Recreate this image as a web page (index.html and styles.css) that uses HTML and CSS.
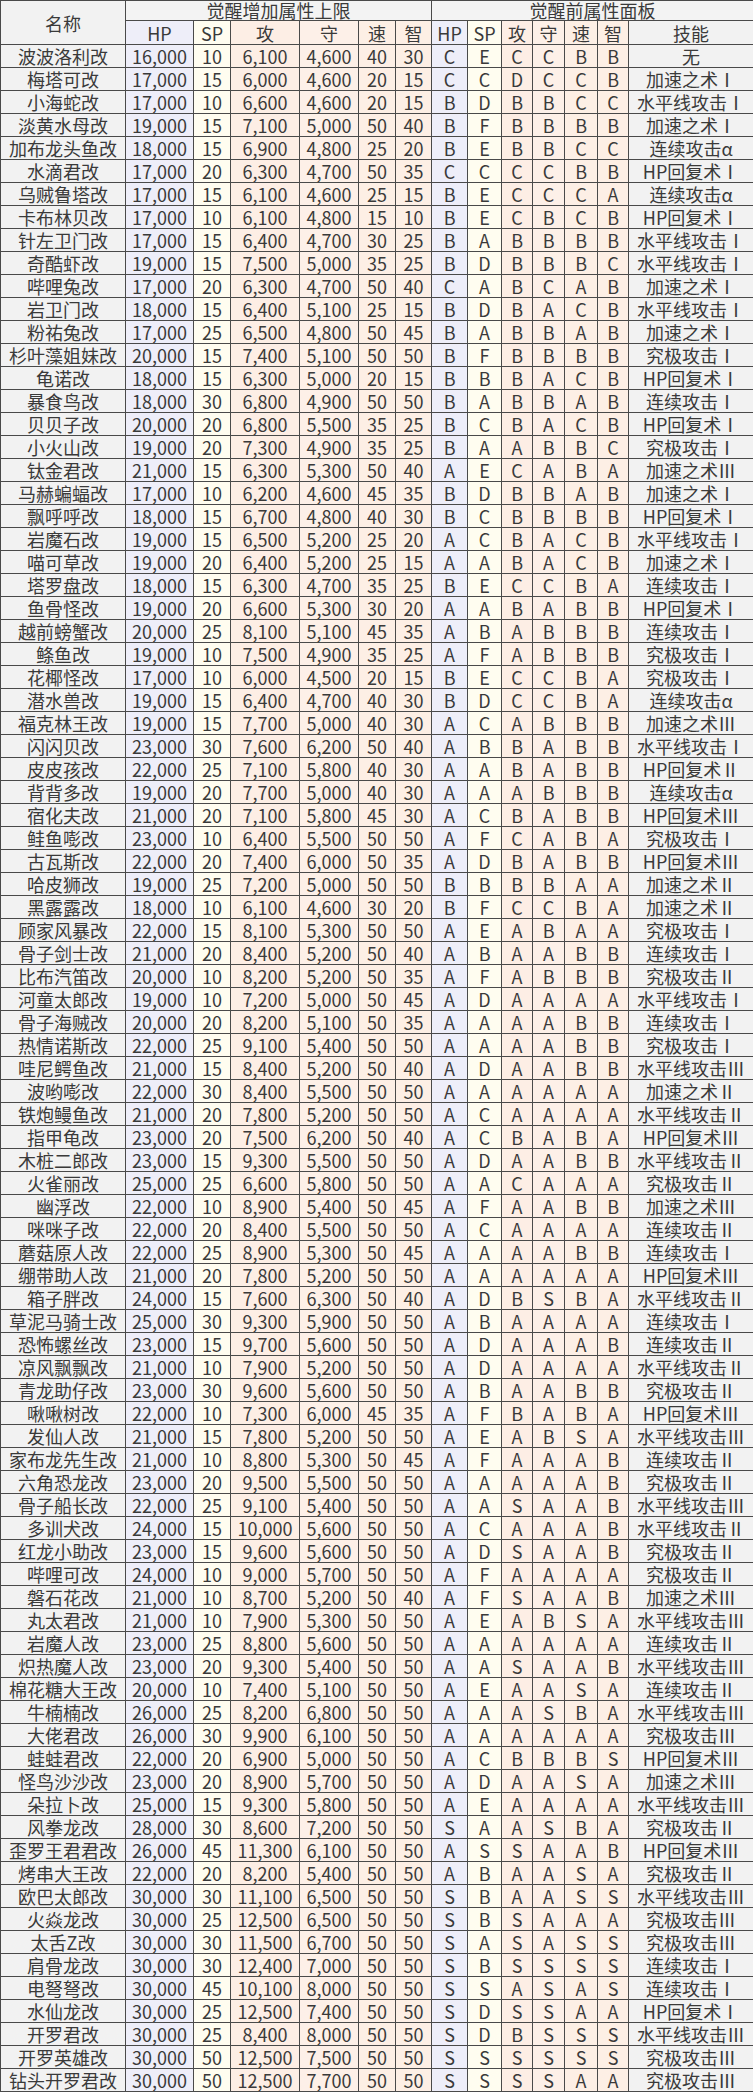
FILE: index.html
```html
<!DOCTYPE html>
<html lang="zh-CN">
<head>
<meta charset="utf-8">
<title>觉醒属性表</title>
<link rel="stylesheet" href="styles.css">
</head>
<body>
<table class="sheet">
<colgroup>
<col class="c-name"><col class="c-hp w-hp"><col class="c-sp w-sp"><col class="c-atk w-atk"><col class="c-def w-def"><col class="c-spd w-spd"><col class="c-int w-int">
<col class="c-hp w-hp2"><col class="c-sp w-sp2"><col class="c-atk w-atk2"><col class="c-def w-def2"><col class="c-spd w-spd2"><col class="c-int w-int2"><col class="c-skill">
</colgroup>
<thead>
<tr class="h1"><th rowspan="2" class="name-h">名称</th><th colspan="6" class="group">觉醒增加属性上限</th><th colspan="7" class="group">觉醒前属性面板</th></tr>
<tr class="h2"><th>HP</th><th>SP</th><th>攻</th><th>守</th><th>速</th><th>智</th><th>HP</th><th>SP</th><th>攻</th><th>守</th><th>速</th><th>智</th><th>技能</th></tr>
</thead>
<tbody>
<tr><td>波波洛利改</td><td>16,000</td><td>10</td><td>6,100</td><td>4,600</td><td>40</td><td>30</td><td>C</td><td>E</td><td>C</td><td>C</td><td>B</td><td>B</td><td>无</td></tr>
<tr><td>梅塔可改</td><td>17,000</td><td>15</td><td>6,000</td><td>4,600</td><td>20</td><td>15</td><td>C</td><td>C</td><td>D</td><td>C</td><td>C</td><td>B</td><td>加速之术Ⅰ</td></tr>
<tr><td>小海蛇改</td><td>17,000</td><td>10</td><td>6,600</td><td>4,600</td><td>20</td><td>15</td><td>B</td><td>D</td><td>B</td><td>B</td><td>C</td><td>C</td><td>水平线攻击Ⅰ</td></tr>
<tr><td>淡黄水母改</td><td>19,000</td><td>15</td><td>7,100</td><td>5,000</td><td>50</td><td>40</td><td>B</td><td>F</td><td>B</td><td>B</td><td>B</td><td>B</td><td>加速之术Ⅰ</td></tr>
<tr><td>加布龙头鱼改</td><td>18,000</td><td>15</td><td>6,900</td><td>4,800</td><td>25</td><td>20</td><td>B</td><td>E</td><td>B</td><td>B</td><td>C</td><td>C</td><td>连续攻击α</td></tr>
<tr><td>水滴君改</td><td>17,000</td><td>20</td><td>6,300</td><td>4,700</td><td>50</td><td>35</td><td>C</td><td>C</td><td>C</td><td>C</td><td>B</td><td>B</td><td>HP回复术Ⅰ</td></tr>
<tr><td>乌贼鲁塔改</td><td>17,000</td><td>15</td><td>6,100</td><td>4,600</td><td>25</td><td>15</td><td>B</td><td>E</td><td>C</td><td>C</td><td>C</td><td>A</td><td>连续攻击α</td></tr>
<tr><td>卡布林贝改</td><td>17,000</td><td>10</td><td>6,100</td><td>4,800</td><td>15</td><td>10</td><td>B</td><td>E</td><td>C</td><td>B</td><td>C</td><td>B</td><td>HP回复术Ⅰ</td></tr>
<tr><td>针左卫门改</td><td>17,000</td><td>15</td><td>6,400</td><td>4,700</td><td>30</td><td>25</td><td>B</td><td>A</td><td>B</td><td>B</td><td>B</td><td>B</td><td>水平线攻击Ⅰ</td></tr>
<tr><td>奇酷虾改</td><td>19,000</td><td>15</td><td>7,500</td><td>5,000</td><td>35</td><td>25</td><td>B</td><td>D</td><td>B</td><td>B</td><td>B</td><td>C</td><td>水平线攻击Ⅰ</td></tr>
<tr><td>哔哩兔改</td><td>17,000</td><td>20</td><td>6,300</td><td>4,700</td><td>50</td><td>40</td><td>C</td><td>A</td><td>B</td><td>C</td><td>A</td><td>B</td><td>加速之术Ⅰ</td></tr>
<tr><td>岩卫门改</td><td>18,000</td><td>15</td><td>6,400</td><td>5,100</td><td>25</td><td>15</td><td>B</td><td>D</td><td>B</td><td>A</td><td>C</td><td>B</td><td>水平线攻击Ⅰ</td></tr>
<tr><td>粉祐兔改</td><td>17,000</td><td>25</td><td>6,500</td><td>4,800</td><td>50</td><td>45</td><td>B</td><td>A</td><td>B</td><td>B</td><td>A</td><td>B</td><td>加速之术Ⅰ</td></tr>
<tr><td>杉叶藻姐妹改</td><td>20,000</td><td>15</td><td>7,400</td><td>5,100</td><td>50</td><td>50</td><td>B</td><td>F</td><td>B</td><td>B</td><td>B</td><td>B</td><td>究极攻击Ⅰ</td></tr>
<tr><td>龟诺改</td><td>18,000</td><td>15</td><td>6,300</td><td>5,000</td><td>20</td><td>15</td><td>B</td><td>B</td><td>B</td><td>A</td><td>C</td><td>B</td><td>HP回复术Ⅰ</td></tr>
<tr><td>暴食鸟改</td><td>18,000</td><td>30</td><td>6,800</td><td>4,900</td><td>50</td><td>50</td><td>B</td><td>A</td><td>B</td><td>B</td><td>A</td><td>B</td><td>连续攻击Ⅰ</td></tr>
<tr><td>贝贝子改</td><td>20,000</td><td>20</td><td>6,800</td><td>5,500</td><td>35</td><td>25</td><td>B</td><td>C</td><td>B</td><td>A</td><td>C</td><td>B</td><td>HP回复术Ⅰ</td></tr>
<tr><td>小火山改</td><td>19,000</td><td>20</td><td>7,300</td><td>4,900</td><td>35</td><td>25</td><td>B</td><td>A</td><td>A</td><td>B</td><td>B</td><td>C</td><td>究极攻击Ⅰ</td></tr>
<tr><td>钛金君改</td><td>21,000</td><td>15</td><td>6,300</td><td>5,300</td><td>50</td><td>40</td><td>A</td><td>E</td><td>C</td><td>A</td><td>B</td><td>A</td><td>加速之术Ⅲ</td></tr>
<tr><td>马赫蝙蝠改</td><td>17,000</td><td>10</td><td>6,200</td><td>4,600</td><td>45</td><td>35</td><td>B</td><td>D</td><td>B</td><td>B</td><td>A</td><td>B</td><td>加速之术Ⅰ</td></tr>
<tr><td>飘呼呼改</td><td>18,000</td><td>15</td><td>6,700</td><td>4,800</td><td>40</td><td>30</td><td>B</td><td>C</td><td>B</td><td>B</td><td>B</td><td>B</td><td>HP回复术Ⅰ</td></tr>
<tr><td>岩魔石改</td><td>19,000</td><td>15</td><td>6,500</td><td>5,200</td><td>25</td><td>20</td><td>A</td><td>C</td><td>B</td><td>A</td><td>C</td><td>B</td><td>水平线攻击Ⅰ</td></tr>
<tr><td>喵可草改</td><td>19,000</td><td>20</td><td>6,400</td><td>5,200</td><td>25</td><td>15</td><td>A</td><td>A</td><td>B</td><td>A</td><td>C</td><td>B</td><td>加速之术Ⅰ</td></tr>
<tr><td>塔罗盘改</td><td>18,000</td><td>15</td><td>6,300</td><td>4,700</td><td>35</td><td>25</td><td>B</td><td>E</td><td>C</td><td>C</td><td>B</td><td>A</td><td>连续攻击Ⅰ</td></tr>
<tr><td>鱼骨怪改</td><td>19,000</td><td>20</td><td>6,600</td><td>5,300</td><td>30</td><td>20</td><td>A</td><td>A</td><td>B</td><td>A</td><td>B</td><td>B</td><td>HP回复术Ⅰ</td></tr>
<tr><td>越前螃蟹改</td><td>20,000</td><td>25</td><td>8,100</td><td>5,100</td><td>45</td><td>35</td><td>A</td><td>B</td><td>A</td><td>B</td><td>B</td><td>B</td><td>连续攻击Ⅰ</td></tr>
<tr><td>鲦鱼改</td><td>19,000</td><td>10</td><td>7,500</td><td>4,900</td><td>35</td><td>25</td><td>A</td><td>F</td><td>A</td><td>B</td><td>B</td><td>B</td><td>究极攻击Ⅰ</td></tr>
<tr><td>花椰怪改</td><td>17,000</td><td>10</td><td>6,000</td><td>4,500</td><td>20</td><td>15</td><td>B</td><td>E</td><td>C</td><td>C</td><td>B</td><td>A</td><td>究极攻击Ⅰ</td></tr>
<tr><td>潜水兽改</td><td>19,000</td><td>15</td><td>6,400</td><td>4,700</td><td>40</td><td>30</td><td>B</td><td>D</td><td>C</td><td>C</td><td>B</td><td>A</td><td>连续攻击α</td></tr>
<tr><td>福克林王改</td><td>19,000</td><td>15</td><td>7,700</td><td>5,000</td><td>40</td><td>30</td><td>A</td><td>C</td><td>A</td><td>B</td><td>B</td><td>B</td><td>加速之术Ⅲ</td></tr>
<tr><td>闪闪贝改</td><td>23,000</td><td>30</td><td>7,600</td><td>6,200</td><td>50</td><td>40</td><td>A</td><td>B</td><td>B</td><td>A</td><td>B</td><td>B</td><td>水平线攻击Ⅰ</td></tr>
<tr><td>皮皮孩改</td><td>22,000</td><td>25</td><td>7,100</td><td>5,800</td><td>40</td><td>30</td><td>A</td><td>A</td><td>B</td><td>A</td><td>B</td><td>B</td><td>HP回复术Ⅱ</td></tr>
<tr><td>背背多改</td><td>19,000</td><td>20</td><td>7,700</td><td>5,000</td><td>40</td><td>30</td><td>A</td><td>A</td><td>A</td><td>B</td><td>B</td><td>B</td><td>连续攻击α</td></tr>
<tr><td>宿化夫改</td><td>21,000</td><td>20</td><td>7,100</td><td>5,800</td><td>45</td><td>30</td><td>A</td><td>C</td><td>B</td><td>A</td><td>B</td><td>B</td><td>HP回复术Ⅲ</td></tr>
<tr><td>鲑鱼嘭改</td><td>23,000</td><td>10</td><td>6,400</td><td>5,500</td><td>50</td><td>50</td><td>A</td><td>F</td><td>C</td><td>A</td><td>B</td><td>A</td><td>究极攻击Ⅰ</td></tr>
<tr><td>古瓦斯改</td><td>22,000</td><td>20</td><td>7,400</td><td>6,000</td><td>50</td><td>35</td><td>A</td><td>D</td><td>B</td><td>A</td><td>B</td><td>B</td><td>HP回复术Ⅲ</td></tr>
<tr><td>哈皮狮改</td><td>19,000</td><td>25</td><td>7,200</td><td>5,000</td><td>50</td><td>50</td><td>B</td><td>B</td><td>B</td><td>B</td><td>A</td><td>A</td><td>加速之术Ⅱ</td></tr>
<tr><td>黑露露改</td><td>18,000</td><td>10</td><td>6,100</td><td>4,600</td><td>30</td><td>20</td><td>B</td><td>F</td><td>C</td><td>C</td><td>B</td><td>A</td><td>加速之术Ⅱ</td></tr>
<tr><td>顾家风暴改</td><td>22,000</td><td>15</td><td>8,100</td><td>5,300</td><td>50</td><td>50</td><td>A</td><td>E</td><td>A</td><td>B</td><td>A</td><td>A</td><td>究极攻击Ⅰ</td></tr>
<tr><td>骨子剑士改</td><td>21,000</td><td>20</td><td>8,400</td><td>5,200</td><td>50</td><td>40</td><td>A</td><td>B</td><td>A</td><td>A</td><td>B</td><td>B</td><td>连续攻击Ⅰ</td></tr>
<tr><td>比布汽笛改</td><td>20,000</td><td>10</td><td>8,200</td><td>5,200</td><td>50</td><td>35</td><td>A</td><td>F</td><td>A</td><td>B</td><td>B</td><td>B</td><td>究极攻击Ⅱ</td></tr>
<tr><td>河童太郎改</td><td>19,000</td><td>10</td><td>7,200</td><td>5,000</td><td>50</td><td>45</td><td>A</td><td>D</td><td>A</td><td>A</td><td>A</td><td>A</td><td>水平线攻击Ⅰ</td></tr>
<tr><td>骨子海贼改</td><td>20,000</td><td>20</td><td>8,200</td><td>5,100</td><td>50</td><td>35</td><td>A</td><td>A</td><td>A</td><td>A</td><td>B</td><td>B</td><td>连续攻击Ⅰ</td></tr>
<tr><td>热情诺斯改</td><td>22,000</td><td>25</td><td>9,100</td><td>5,400</td><td>50</td><td>50</td><td>A</td><td>A</td><td>A</td><td>A</td><td>B</td><td>B</td><td>究极攻击Ⅰ</td></tr>
<tr><td>哇尼鳄鱼改</td><td>21,000</td><td>15</td><td>8,400</td><td>5,200</td><td>50</td><td>40</td><td>A</td><td>D</td><td>A</td><td>A</td><td>B</td><td>B</td><td>水平线攻击Ⅲ</td></tr>
<tr><td>波哟嘭改</td><td>22,000</td><td>30</td><td>8,400</td><td>5,500</td><td>50</td><td>50</td><td>A</td><td>A</td><td>A</td><td>A</td><td>A</td><td>A</td><td>加速之术Ⅱ</td></tr>
<tr><td>铁炮鳗鱼改</td><td>21,000</td><td>20</td><td>7,800</td><td>5,200</td><td>50</td><td>50</td><td>A</td><td>C</td><td>A</td><td>A</td><td>A</td><td>A</td><td>水平线攻击Ⅱ</td></tr>
<tr><td>指甲龟改</td><td>23,000</td><td>20</td><td>7,500</td><td>6,200</td><td>50</td><td>40</td><td>A</td><td>C</td><td>B</td><td>A</td><td>B</td><td>A</td><td>HP回复术Ⅲ</td></tr>
<tr><td>木桩二郎改</td><td>23,000</td><td>15</td><td>9,300</td><td>5,500</td><td>50</td><td>50</td><td>A</td><td>D</td><td>A</td><td>A</td><td>B</td><td>B</td><td>水平线攻击Ⅱ</td></tr>
<tr><td>火雀丽改</td><td>25,000</td><td>25</td><td>6,600</td><td>5,800</td><td>50</td><td>50</td><td>A</td><td>A</td><td>C</td><td>A</td><td>A</td><td>A</td><td>究极攻击Ⅱ</td></tr>
<tr><td>幽浮改</td><td>22,000</td><td>10</td><td>8,900</td><td>5,400</td><td>50</td><td>45</td><td>A</td><td>F</td><td>A</td><td>A</td><td>B</td><td>B</td><td>加速之术Ⅲ</td></tr>
<tr><td>咪咪子改</td><td>22,000</td><td>20</td><td>8,400</td><td>5,500</td><td>50</td><td>50</td><td>A</td><td>C</td><td>A</td><td>A</td><td>A</td><td>A</td><td>连续攻击Ⅱ</td></tr>
<tr><td>蘑菇原人改</td><td>22,000</td><td>25</td><td>8,900</td><td>5,300</td><td>50</td><td>45</td><td>A</td><td>A</td><td>A</td><td>A</td><td>B</td><td>B</td><td>连续攻击Ⅰ</td></tr>
<tr><td>绷带助人改</td><td>21,000</td><td>20</td><td>7,800</td><td>5,200</td><td>50</td><td>50</td><td>A</td><td>A</td><td>A</td><td>A</td><td>A</td><td>A</td><td>HP回复术Ⅲ</td></tr>
<tr><td>箱子胖改</td><td>24,000</td><td>15</td><td>7,600</td><td>6,300</td><td>50</td><td>40</td><td>A</td><td>D</td><td>B</td><td>S</td><td>B</td><td>A</td><td>水平线攻击Ⅱ</td></tr>
<tr><td>草泥马骑士改</td><td>25,000</td><td>30</td><td>9,300</td><td>5,900</td><td>50</td><td>50</td><td>A</td><td>B</td><td>A</td><td>A</td><td>A</td><td>A</td><td>连续攻击Ⅰ</td></tr>
<tr><td>恐怖螺丝改</td><td>23,000</td><td>15</td><td>9,700</td><td>5,600</td><td>50</td><td>50</td><td>A</td><td>D</td><td>A</td><td>A</td><td>A</td><td>B</td><td>连续攻击Ⅱ</td></tr>
<tr><td>凉风飘飘改</td><td>21,000</td><td>10</td><td>7,900</td><td>5,200</td><td>50</td><td>50</td><td>A</td><td>D</td><td>A</td><td>A</td><td>A</td><td>A</td><td>水平线攻击Ⅱ</td></tr>
<tr><td>青龙助仔改</td><td>23,000</td><td>30</td><td>9,600</td><td>5,600</td><td>50</td><td>50</td><td>A</td><td>B</td><td>A</td><td>A</td><td>B</td><td>B</td><td>究极攻击Ⅱ</td></tr>
<tr><td>啾啾树改</td><td>22,000</td><td>10</td><td>7,300</td><td>6,000</td><td>45</td><td>35</td><td>A</td><td>F</td><td>B</td><td>A</td><td>B</td><td>A</td><td>HP回复术Ⅲ</td></tr>
<tr><td>发仙人改</td><td>21,000</td><td>15</td><td>7,800</td><td>5,200</td><td>50</td><td>50</td><td>A</td><td>E</td><td>A</td><td>B</td><td>S</td><td>A</td><td>水平线攻击Ⅲ</td></tr>
<tr><td>家布龙先生改</td><td>21,000</td><td>10</td><td>8,800</td><td>5,300</td><td>50</td><td>45</td><td>A</td><td>F</td><td>A</td><td>A</td><td>A</td><td>B</td><td>连续攻击Ⅱ</td></tr>
<tr><td>六角恐龙改</td><td>23,000</td><td>20</td><td>9,500</td><td>5,500</td><td>50</td><td>50</td><td>A</td><td>A</td><td>A</td><td>A</td><td>A</td><td>B</td><td>究极攻击Ⅱ</td></tr>
<tr><td>骨子船长改</td><td>22,000</td><td>25</td><td>9,100</td><td>5,400</td><td>50</td><td>50</td><td>A</td><td>A</td><td>S</td><td>A</td><td>A</td><td>B</td><td>水平线攻击Ⅲ</td></tr>
<tr><td>多训犬改</td><td>24,000</td><td>15</td><td>10,000</td><td>5,600</td><td>50</td><td>50</td><td>A</td><td>C</td><td>A</td><td>A</td><td>A</td><td>B</td><td>水平线攻击Ⅱ</td></tr>
<tr><td>红龙小助改</td><td>23,000</td><td>15</td><td>9,600</td><td>5,600</td><td>50</td><td>50</td><td>A</td><td>D</td><td>S</td><td>A</td><td>A</td><td>B</td><td>究极攻击Ⅱ</td></tr>
<tr><td>哔哩可改</td><td>24,000</td><td>10</td><td>9,000</td><td>5,700</td><td>50</td><td>50</td><td>A</td><td>F</td><td>A</td><td>A</td><td>A</td><td>A</td><td>究极攻击Ⅱ</td></tr>
<tr><td>磐石花改</td><td>21,000</td><td>10</td><td>8,700</td><td>5,200</td><td>50</td><td>40</td><td>A</td><td>F</td><td>S</td><td>A</td><td>A</td><td>B</td><td>加速之术Ⅲ</td></tr>
<tr><td>丸太君改</td><td>21,000</td><td>10</td><td>7,900</td><td>5,300</td><td>50</td><td>50</td><td>A</td><td>E</td><td>A</td><td>B</td><td>S</td><td>A</td><td>水平线攻击Ⅲ</td></tr>
<tr><td>岩魔人改</td><td>23,000</td><td>25</td><td>8,800</td><td>5,600</td><td>50</td><td>50</td><td>A</td><td>A</td><td>A</td><td>A</td><td>A</td><td>A</td><td>连续攻击Ⅱ</td></tr>
<tr><td>炽热魔人改</td><td>23,000</td><td>20</td><td>9,300</td><td>5,400</td><td>50</td><td>50</td><td>A</td><td>A</td><td>S</td><td>A</td><td>A</td><td>B</td><td>水平线攻击Ⅲ</td></tr>
<tr><td>棉花糖大王改</td><td>20,000</td><td>10</td><td>7,400</td><td>5,100</td><td>50</td><td>50</td><td>A</td><td>E</td><td>A</td><td>A</td><td>S</td><td>A</td><td>连续攻击Ⅱ</td></tr>
<tr><td>牛楠楠改</td><td>26,000</td><td>25</td><td>8,200</td><td>6,800</td><td>50</td><td>50</td><td>A</td><td>A</td><td>A</td><td>S</td><td>B</td><td>A</td><td>水平线攻击Ⅲ</td></tr>
<tr><td>大佬君改</td><td>26,000</td><td>30</td><td>9,900</td><td>6,100</td><td>50</td><td>50</td><td>A</td><td>A</td><td>A</td><td>A</td><td>A</td><td>A</td><td>究极攻击Ⅲ</td></tr>
<tr><td>蛙蛙君改</td><td>22,000</td><td>20</td><td>6,900</td><td>5,000</td><td>50</td><td>50</td><td>A</td><td>C</td><td>B</td><td>B</td><td>B</td><td>S</td><td>HP回复术Ⅲ</td></tr>
<tr><td>怪鸟沙沙改</td><td>23,000</td><td>20</td><td>8,900</td><td>5,700</td><td>50</td><td>50</td><td>A</td><td>D</td><td>A</td><td>A</td><td>S</td><td>A</td><td>加速之术Ⅲ</td></tr>
<tr><td>朵拉卜改</td><td>25,000</td><td>15</td><td>9,300</td><td>5,800</td><td>50</td><td>50</td><td>A</td><td>E</td><td>A</td><td>A</td><td>A</td><td>A</td><td>水平线攻击Ⅲ</td></tr>
<tr><td>风拳龙改</td><td>28,000</td><td>30</td><td>8,600</td><td>7,200</td><td>50</td><td>50</td><td>S</td><td>A</td><td>A</td><td>S</td><td>B</td><td>A</td><td>究极攻击Ⅱ</td></tr>
<tr><td>歪罗王君君改</td><td>26,000</td><td>45</td><td>11,300</td><td>6,100</td><td>50</td><td>50</td><td>A</td><td>S</td><td>S</td><td>A</td><td>A</td><td>B</td><td>HP回复术Ⅲ</td></tr>
<tr><td>烤串大王改</td><td>22,000</td><td>20</td><td>8,200</td><td>5,400</td><td>50</td><td>50</td><td>A</td><td>B</td><td>A</td><td>A</td><td>S</td><td>A</td><td>究极攻击Ⅱ</td></tr>
<tr><td>欧巴太郎改</td><td>30,000</td><td>30</td><td>11,100</td><td>6,500</td><td>50</td><td>50</td><td>S</td><td>B</td><td>A</td><td>A</td><td>S</td><td>S</td><td>水平线攻击Ⅲ</td></tr>
<tr><td>火焱龙改</td><td>30,000</td><td>25</td><td>12,500</td><td>6,500</td><td>50</td><td>50</td><td>S</td><td>B</td><td>S</td><td>A</td><td>A</td><td>A</td><td>究极攻击Ⅲ</td></tr>
<tr><td>太舌Z改</td><td>30,000</td><td>30</td><td>11,500</td><td>6,700</td><td>50</td><td>50</td><td>S</td><td>A</td><td>S</td><td>A</td><td>S</td><td>S</td><td>究极攻击Ⅲ</td></tr>
<tr><td>肩骨龙改</td><td>30,000</td><td>30</td><td>12,400</td><td>7,000</td><td>50</td><td>50</td><td>S</td><td>B</td><td>S</td><td>S</td><td>S</td><td>S</td><td>连续攻击Ⅰ</td></tr>
<tr><td>电弩弩改</td><td>30,000</td><td>45</td><td>10,100</td><td>8,000</td><td>50</td><td>50</td><td>S</td><td>S</td><td>A</td><td>S</td><td>A</td><td>S</td><td>连续攻击Ⅰ</td></tr>
<tr><td>水仙龙改</td><td>30,000</td><td>25</td><td>12,500</td><td>7,400</td><td>50</td><td>50</td><td>S</td><td>D</td><td>S</td><td>S</td><td>A</td><td>A</td><td>HP回复术Ⅰ</td></tr>
<tr><td>开罗君改</td><td>30,000</td><td>25</td><td>8,400</td><td>8,000</td><td>50</td><td>50</td><td>S</td><td>D</td><td>B</td><td>S</td><td>S</td><td>S</td><td>水平线攻击Ⅲ</td></tr>
<tr><td>开罗英雄改</td><td>30,000</td><td>50</td><td>12,500</td><td>7,500</td><td>50</td><td>50</td><td>S</td><td>S</td><td>S</td><td>S</td><td>S</td><td>S</td><td>究极攻击Ⅲ</td></tr>
<tr><td>钻头开罗君改</td><td>30,000</td><td>50</td><td>12,500</td><td>7,700</td><td>50</td><td>50</td><td>S</td><td>S</td><td>S</td><td>S</td><td>A</td><td>A</td><td>究极攻击Ⅲ</td></tr>
</tbody>
</table>
</body>
</html>
```

FILE: styles.css
```css
html, body {
  margin: 0;
  padding: 0;
  background: #ffffff;
}

.sheet {
  width: 753px;
  table-layout: fixed;
  border-collapse: collapse;
  font-family: "Noto Sans CJK SC", "Noto Sans", sans-serif;
  font-size: 18px;
  color: #3a3a3a;
}

.sheet th,
.sheet td {
  border: 1px solid #4a4a4a;
  padding: 0;
  text-align: center;
  vertical-align: middle;
  font-weight: 400;
  line-height: 20px;
  white-space: nowrap;
}

.sheet td { overflow: hidden; }

.sheet tbody tr { height: 23px; }
.sheet .h1 { height: 20px; }
.sheet .h1 .group { line-height: 17px; }
.sheet .h2 { height: 24px; }

.sheet .group { background: #f3f3f3; }

.c-name { width: 125px; background: #f2f2f2; }
.c-skill { width: 125px; background: #f2f2f2; }
.c-hp { background: #eeeef9; }
.c-sp { background: #fffdf0; }
.c-atk { background: #fdeee5; }
.c-def { background: #fdf0e8; }
.c-spd { background: #fdefe5; }
.c-int { background: #fdefe5; }

.w-hp { width: 68px; }
.w-sp { width: 37px; }
.w-atk { width: 69px; }
.w-def { width: 59px; }
.w-spd { width: 37px; }
.w-int { width: 36px; }
.w-hp2 { width: 36px; }
.w-sp2 { width: 34px; }
.w-atk2 { width: 31px; }
.w-def2 { width: 32px; }
.w-spd2 { width: 33px; }
.w-int2 { width: 31px; }
```
